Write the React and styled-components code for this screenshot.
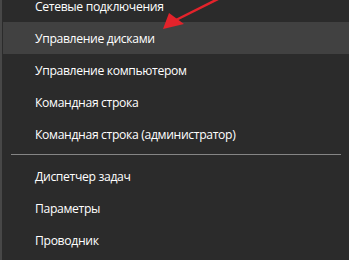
import React from 'react'
import styled, { createGlobalStyle } from 'styled-components'

const GlobalStyle = createGlobalStyle`
    html, body {
        margin: 0;
        padding: 0;
        background: #2b2b2b;
    }
`

const Screen = styled.div`
    position: relative;
    width: 349px;
    height: 260px;
    overflow: hidden;
    background: #2b2b2b;
    border-left: 2px solid #474747;
    box-sizing: border-box;
    font-family: "Open Sans", "Noto Sans", sans-serif;
`

const MenuList = styled.div`
    display: flex;
    flex-direction: column;
    margin-top: -10px;
    padding-left: 1px;
`

const MenuItem = styled.div`
    display: flex;
    align-items: center;
    height: 32px;
    padding-left: 32px;
    font-size: 12.2px;
    letter-spacing: -0.35px;
    color: #ffffff;
    background: ${props => props.active ? '#414141' : 'transparent'};
    white-space: nowrap;
`

const Separator = styled.div`
    height: 1px;
    margin: 4px 8px 5px 8px;
    background: #858585;
`

const ArrowLayer = styled.svg`
    position: absolute;
    left: -2px;
    top: 0;
    pointer-events: none;
`

const topItems = [
    "Сетевые подключения",
    "Управление дисками",
    "Управление компьютером",
    "Командная строка",
    "Командная строка (администратор)"
]

const bottomItems = [
    "Диспетчер задач",
    "Параметры",
    "Проводник"
]

export default function App() {
    return (
        <Screen>
            <GlobalStyle />
            <MenuList>
                {topItems.map((item, i) => (
                    <MenuItem key={item} active={i === 1}>{item}</MenuItem>
                ))}
                <Separator />
                {bottomItems.map(item => (
                    <MenuItem key={item}>{item}</MenuItem>
                ))}
            </MenuList>
            <ArrowLayer width="349" height="260" viewBox="0 0 349 260">
                <line x1="176" y1="20" x2="224" y2="-4" stroke="#e3232b" strokeWidth="2.5" />
                <polygon points="163,29 169,13 184,24" fill="#e3232b" />
            </ArrowLayer>
        </Screen>
    )
}
